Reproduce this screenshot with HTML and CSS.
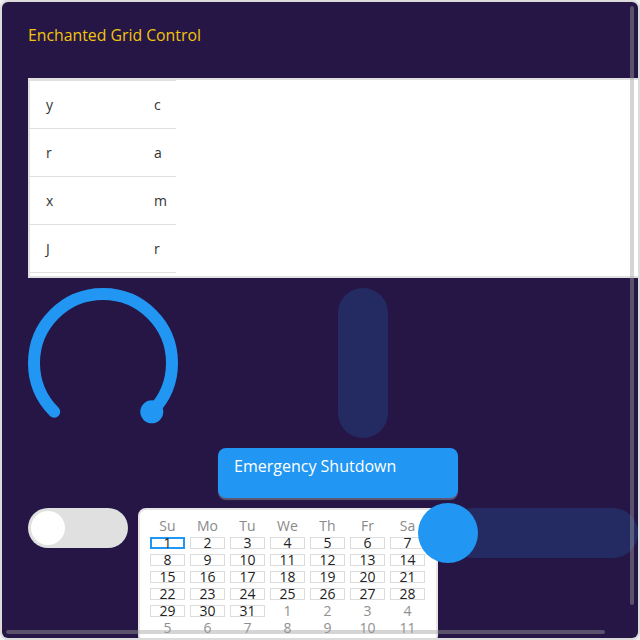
FILE: index.html
```html
<!DOCTYPE html>
<html lang="en">
<head>
<meta charset="utf-8">
<title>Enchanted Grid Control</title>
<link rel="stylesheet" href="styles.css">
</head>
<body>
<div class="frame">
<div class="app">
  <div class="inner">
    <h1 class="title">Enchanted Grid Control</h1>

    <div class="grid-table">
      <div class="row"><div class="cell c1">y</div><div class="cell c2">c</div></div>
      <div class="row"><div class="cell c1">r</div><div class="cell c2">a</div></div>
      <div class="row"><div class="cell c1">x</div><div class="cell c2">m</div></div>
      <div class="row"><div class="cell c1">J</div><div class="cell c2">r</div></div>
    </div>

    <div class="controls">
      <div class="knob">
        <svg width="150" height="150" viewBox="0 0 150 150">
          <path d="M 26.21 123.79 A 69 69 0 1 1 123.79 123.79" fill="none" stroke="#2196f3" stroke-width="12" stroke-linecap="round"/>
          <circle cx="123.79" cy="123.79" r="11.5" fill="#2196f3"/>
        </svg>
      </div>
      <div class="vslider"></div>
    </div>

    <div class="button-row">
      <button class="btn">Emergency Shutdown</button>
    </div>

    <div class="bottom-row">
      <div class="toggle"><span class="toggle-knob"></span></div>

      <div class="calendar">
        <div class="cal-head">
          <span>Su</span><span>Mo</span><span>Tu</span><span>We</span><span>Th</span><span>Fr</span><span>Sa</span>
        </div>
        <div class="cal-days">
          <span class="day sel">1</span><span class="day">2</span><span class="day">3</span><span class="day">4</span><span class="day">5</span><span class="day">6</span><span class="day">7</span>
          <span class="day">8</span><span class="day">9</span><span class="day">10</span><span class="day">11</span><span class="day">12</span><span class="day">13</span><span class="day">14</span>
          <span class="day">15</span><span class="day">16</span><span class="day">17</span><span class="day">18</span><span class="day">19</span><span class="day">20</span><span class="day">21</span>
          <span class="day">22</span><span class="day">23</span><span class="day">24</span><span class="day">25</span><span class="day">26</span><span class="day">27</span><span class="day">28</span>
          <span class="day">29</span><span class="day">30</span><span class="day">31</span><span class="day other">1</span><span class="day other">2</span><span class="day other">3</span><span class="day other">4</span>
          <span class="day other">5</span><span class="day other">6</span><span class="day other">7</span><span class="day other">8</span><span class="day other">9</span><span class="day other">10</span><span class="day other">11</span>
        </div>
      </div>

      <div class="hslider"><span class="hthumb"></span></div>
    </div>
  </div>
</div>
<div class="scroll-thumb vertical"></div>
<div class="scroll-thumb horizontal"></div>
</div>
</body>
</html>
```

FILE: styles.css
```css
html, body {
  margin: 0;
  padding: 0;
}

body {
  background: #efeef0;
  font-family: "Open Sans", "DejaVu Sans", sans-serif;
}

.frame {
  position: relative;
  width: 640px;
  height: 640px;
}

.app {
  box-sizing: border-box;
  width: 640px;
  height: 640px;
  border: 2px solid #dcdcdc;
  border-radius: 8px;
  background: #251645;
  overflow: auto;
}

.scroll-thumb {
  position: absolute;
  border-radius: 2px;
  background: rgba(159, 159, 159, 0.44);
  pointer-events: none;
}

.scroll-thumb.vertical {
  left: 630px;
  top: 6px;
  width: 4px;
  height: 599px;
}

.scroll-thumb.horizontal {
  left: 6px;
  top: 630px;
  width: 599px;
  height: 4px;
}

.inner {
  width: 620px;
  padding: 23px 26px 26px 26px;
}

.title {
  margin: 0 0 33px 0;
  font-size: 15.8px;
  line-height: 20px;
  font-weight: 400;
  color: #f2c40c;
}

.grid-table {
  box-sizing: border-box;
  width: 620px;
  border: 2px solid #e0e0e0;
  background: #fff;
  padding-bottom: 3px;
}

.row {
  display: flex;
  width: 146px;
  height: 47px;
  border-bottom: 1px solid #e0e0e0;
}

.row:first-child {
  border-top: 1px solid #e0e0e0;
}

.cell {
  box-sizing: border-box;
  display: flex;
  align-items: center;
  padding-left: 16px;
  font-size: 14px;
  color: #333;
}

.c1 { width: 108px; }
.c2 { width: 38px; }

.controls {
  display: flex;
  gap: 10px;
  margin-top: 10px;
}

.knob {
  width: 300px;
  height: 150px;
}

.knob svg {
  display: block;
}

.vslider {
  width: 50px;
  height: 150px;
  border-radius: 25px;
  background: rgba(33, 150, 243, 0.17);
}

.button-row {
  display: flex;
  justify-content: center;
  margin-top: 10px;
}

.btn {
  box-sizing: border-box;
  width: 240px;
  height: 50px;
  padding: 8px 16px;
  border: none;
  border-radius: 8px;
  background: #2196f3;
  color: #fff;
  font-family: "Open Sans", "DejaVu Sans", sans-serif;
  font-size: 16px;
  line-height: 20px;
  text-align: left;
  display: flex;
  align-items: flex-start;
  box-shadow: 0 2px 1px rgba(170, 170, 170, 0.45);
}

.bottom-row {
  display: flex;
  align-items: flex-start;
  gap: 10px;
  margin-top: 10px;
}

.toggle {
  box-sizing: border-box;
  width: 100px;
  height: 40px;
  padding: 3px;
  border-radius: 20px;
  background: #e0e0e0;
  flex: none;
}

.toggle-knob {
  display: block;
  width: 34px;
  height: 34px;
  border-radius: 50%;
  background: #fff;
}

.calendar {
  box-sizing: border-box;
  width: 300px;
  flex: none;
  padding: 7px 11px 8px 10px;
  border: 2px solid #e6e6e6;
  border-radius: 8px;
  background: #fff;
}

.cal-head,
.cal-days {
  display: grid;
  grid-template-columns: repeat(7, 35px);
  column-gap: 5px;
}

.cal-head {
  margin-bottom: 3px;
}

.cal-head span {
  text-align: center;
  font-size: 14px;
  line-height: 17px;
  color: #8a8a8a;
}

.cal-days {
  row-gap: 5px;
}

.day {
  box-sizing: border-box;
  height: 12px;
  border: 1px solid #dcdcdc;
  text-align: center;
  font-size: 14px;
  line-height: 10px;
  color: #222;
}

.day.sel {
  border: 2px solid #2196f3;
  line-height: 8px;
}

.day.other {
  border-color: transparent;
  color: #8f8f8f;
}

.hslider {
  position: relative;
  flex: none;
  width: 190px;
  height: 50px;
  border-radius: 25px;
  background: rgba(33, 150, 243, 0.17);
}

.hthumb {
  position: absolute;
  left: -30px;
  top: -5px;
  width: 60px;
  height: 60px;
  border-radius: 50%;
  background: #2196f3;
}
```
